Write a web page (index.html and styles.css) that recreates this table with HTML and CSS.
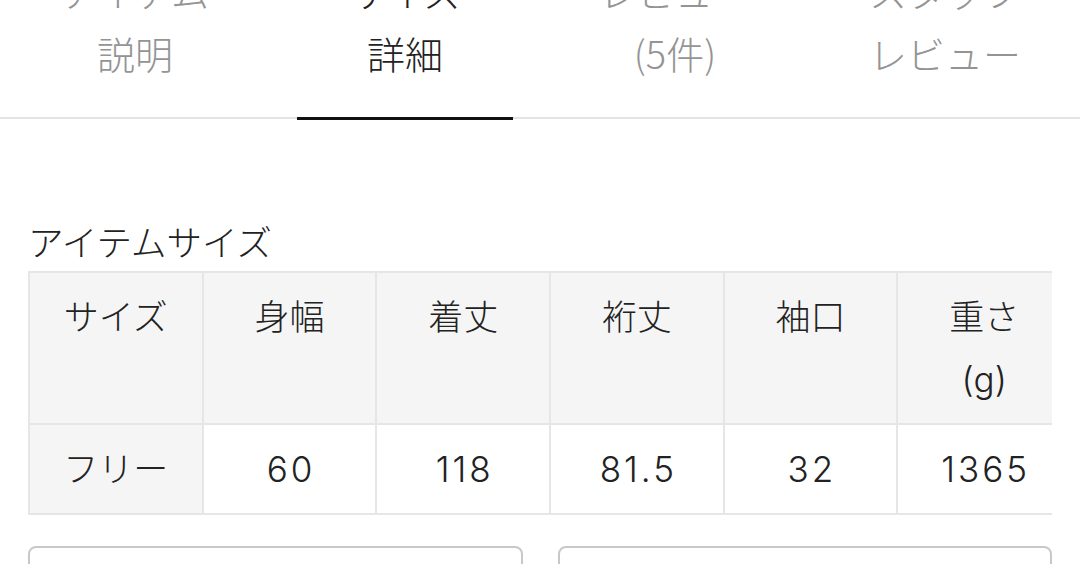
FILE: index.html
```html
<!DOCTYPE html>
<html lang="ja">
<head>
<meta charset="utf-8">
<link rel="stylesheet" href="styles.css">
</head>
<body>
<div class="page">
  <nav class="tabs">
    <div class="tab">アイテム<br>説明</div>
    <div class="tab active">サイズ<br>詳細</div>
    <div class="tab">レビュー<br>(5件)</div>
    <div class="tab">スタッフ<br>レビュー</div>
  </nav>
  <section class="size">
    <h2 class="heading">アイテムサイズ</h2>
    <div class="scroller">
      <table class="size-table">
        <tr class="head">
          <th>サイズ</th><th>身幅</th><th>着丈</th><th>裄丈</th><th>袖口</th><th>重さ<br>(g)</th>
        </tr>
        <tr class="row">
          <th>フリー</th><td>60</td><td>118</td><td>81.5</td><td>32</td><td>1365</td>
        </tr>
      </table>
    </div>
    <div class="buttons">
      <div class="btn"></div>
      <div class="btn"></div>
    </div>
  </section>
</div>
</body>
</html>
```

FILE: styles.css
```css
html, body {
  margin: 0;
  padding: 0;
  background: #fff;
}
body {
  width: 1080px;
  height: 564px;
  overflow: hidden;
  font-family: "Noto Sans CJK JP", "Noto Sans", sans-serif;
  font-weight: 300;
  color: #222;
}
.page {
  margin-top: -40px;
}
.tabs {
  display: flex;
  border-bottom: 2px solid #e4e4e4;
}
.tab {
  position: relative;
  flex: 1;
  text-align: center;
  font-size: 38px;
  line-height: 62px;
  color: #949494;
  padding-bottom: 33px;
}
.tab.active {
  color: #222;
}
.tab.active::after {
  content: "";
  position: absolute;
  left: 27px;
  right: 27px;
  bottom: -3px;
  height: 3px;
  background: #111;
}
.size {
  padding: 97px 28px 0;
}
.heading {
  margin: 0 0 5px;
  font-size: 35.5px;
  font-weight: 300;
  line-height: 50px;
  color: #222;
}
.scroller {
  overflow: hidden;
  width: 1024px;
}
.size-table {
  border-collapse: collapse;
  table-layout: fixed;
  width: 1044px;
}
.size-table th,
.size-table td {
  border: 2px solid #e6e6e6;
  text-align: center;
  vertical-align: top;
  font-family: "Inter", "Noto Sans CJK JP", sans-serif;
  font-size: 35px;
  font-weight: 300;
  line-height: 62px;
  padding: 13px 0;
  color: #222;
}
.row td {
  letter-spacing: 3px;
  text-indent: 3px;
}
.head th {
  background: #f5f5f5;
}
.row th {
  background: #f5f5f5;
}
.row td {
  background: #fff;
}
.buttons {
  display: flex;
  gap: 35px;
  margin-top: 31px;
}
.btn {
  flex: 1;
  height: 80px;
  border: 2px solid #c8c8c8;
  border-radius: 8px;
}
```
